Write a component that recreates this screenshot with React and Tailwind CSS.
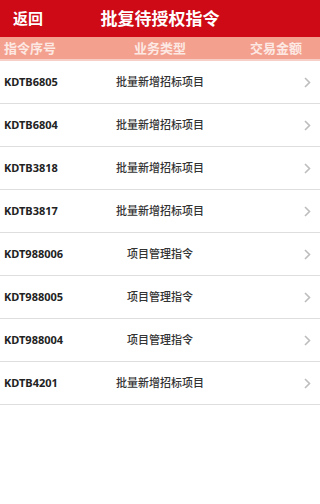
import React from "react";

const rows = [
  ["KDTB6805", "批量新增招标项目"],
  ["KDTB6804", "批量新增招标项目"],
  ["KDTB3818", "批量新增招标项目"],
  ["KDTB3817", "批量新增招标项目"],
  ["KDT988006", "项目管理指令"],
  ["KDT988005", "项目管理指令"],
  ["KDT988004", "项目管理指令"],
  ["KDTB4201", "批量新增招标项目"],
];

const font = { fontFamily: '"Noto Sans", "Noto Sans CJK SC", sans-serif' };

export default function App() {
  return (
    <div className="w-[320px] h-[504px] bg-white overflow-hidden" style={font}>
      <div className="relative h-[37px] bg-[#cd0a15] flex items-center justify-center">
        <span className="absolute left-[13px] top-[8px] text-white text-[15px] font-bold leading-[20px]">返回</span>
        <span className="text-white text-[17px] font-bold leading-[22px]">批复待授权指令</span>
      </div>
      <div className="h-[24px] bg-[#f3a08f] border-b-2 border-[#f8cfc6] grid grid-cols-3 items-center text-[13px] font-bold text-[#fde9e4] leading-[18px]">
        <span className="pl-[4px]">指令序号</span>
        <span className="text-center">业务类型</span>
        <span className="text-right pr-[18px]">交易金额</span>
      </div>
      {rows.map(([code, type]) => (
        <div key={code} className="h-[43px] border-b border-[#dedede] flex items-center">
          <span className="w-[106px] pl-[4px] text-[11px] font-bold text-[#222]">{code}</span>
          <span className="w-[108px] text-center text-[11px] font-medium text-[#333]">{type}</span>
          <span className="flex-1 flex justify-end pr-[9px]">
            <svg width="7" height="11" viewBox="0 0 7 11">
              <path d="M1 1 L5.5 5.5 L1 10" fill="none" stroke="#bdbdbd" strokeWidth="1.6" />
            </svg>
          </span>
        </div>
      ))}
    </div>
  );
}
